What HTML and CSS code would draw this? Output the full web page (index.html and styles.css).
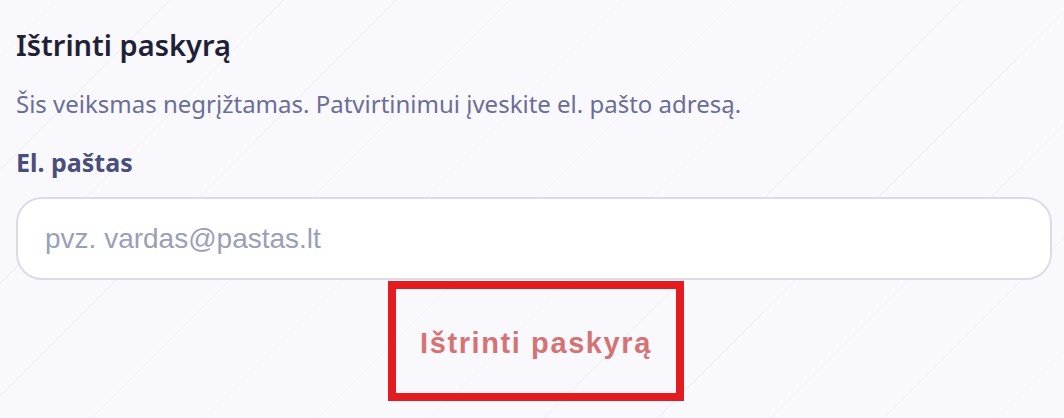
FILE: index.html
```html
<!DOCTYPE html>
<html lang="lt">
<head>
<meta charset="utf-8">
<link rel="stylesheet" href="styles.css">
</head>
<body>
<main class="panel">
  <h2 class="title">Ištrinti paskyrą</h2>
  <p class="desc">Šis veiksmas negrįžtamas. Patvirtinimui įveskite el. pašto adresą.</p>
  <label class="label" for="email">El. paštas</label>
  <input class="input" id="email" type="email" placeholder="pvz. vardas@pastas.lt">
  <div class="actions">
    <button class="danger" type="button" disabled>Ištrinti paskyrą</button>
  </div>
</main>
</body>
</html>
```
FILE: styles.css
```css
html, body {
  margin: 0;
  height: 100%;
}
body {
  background-color: #f9f9fd;
  background-image: repeating-linear-gradient(135deg, rgba(230,230,242,0.0) 0 40px, rgba(230,230,242,0.35) 40px 41px, rgba(230,230,242,0.0) 41px 80px);
  font-family: "Noto Sans", "Open Sans", sans-serif;
  overflow: hidden;
}
.panel {
  padding: 25px 12px 0 16px;
  display: flex;
  flex-direction: column;
}
.title {
  margin: 0;
  font-size: 29px;
  font-weight: 600;
  color: #1f2137;
  line-height: 40px;
}
.desc {
  margin: 23px 0 0;
  font-size: 24px;
  color: #6a6e96;
  line-height: 32px;
}
.label {
  margin-top: 26px;
  font-size: 25px;
  font-weight: 700;
  color: #4a4e7a;
  line-height: 32px;
}
.input {
  margin-top: 19px;
  box-sizing: border-box;
  height: 83px;
  border: 2px solid #dcdce6;
  border-radius: 26px;
  background: #ffffff;
  padding: 0 27px;
  font-family: "Liberation Sans", Arial, sans-serif;
  font-size: 28px;
  color: #2a2d45;
  outline: none;
}
.input::placeholder {
  color: #9a9fb8;
}
.actions {
  display: flex;
  justify-content: center;
  margin-top: 1px;
}
.danger {
  box-sizing: border-box;
  width: 296px;
  height: 120px;
  margin-left: 4px;
  border: 8px solid #e31c1f;
  background: transparent;
  font-family: "Liberation Sans", Arial, sans-serif;
  font-weight: 700;
  font-size: 29px;
  letter-spacing: 1.6px;
  color: #d57374;
  padding: 4px 0 0;
  cursor: not-allowed;
}
```
